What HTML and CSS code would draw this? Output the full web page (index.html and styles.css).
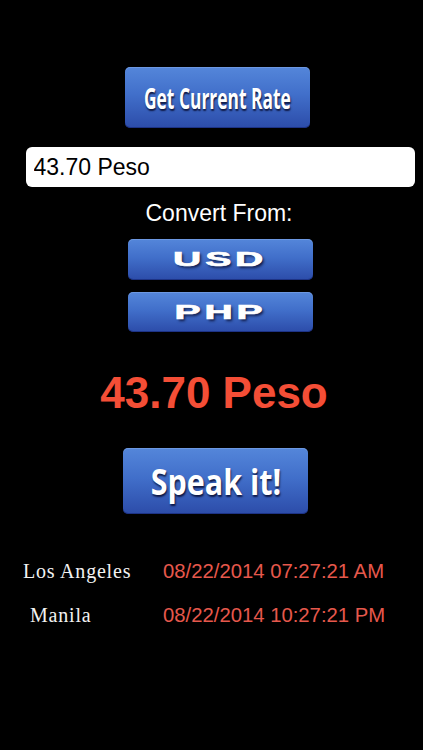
FILE: index.html
```html
<!DOCTYPE html>
<html lang="en">
<head>
<meta charset="utf-8">
<title>Peso Rate</title>
<link rel="stylesheet" href="styles.css">
</head>
<body>
<main class="screen">
  <button class="btn btn-rate" type="button"><span class="btn-label label-rate">Get Current Rate</span></button>
  <input class="rate-field" type="text" value="43.70 Peso" readonly>
  <div class="convert-label">Convert From:</div>
  <button class="btn btn-cur btn-usd" type="button"><span class="btn-label label-cur">USD</span></button>
  <button class="btn btn-cur btn-php" type="button"><span class="btn-label label-cur">PHP</span></button>
  <div class="result">43.70 Peso</div>
  <button class="btn btn-speak" type="button"><span class="btn-label label-speak">Speak it!</span></button>
  <section class="clocks">
    <div class="clock-row">
      <span class="city city-la">Los Angeles</span>
      <span class="time">08/22/2014 07:27:21 AM</span>
    </div>
    <div class="clock-row">
      <span class="city city-mnl">Manila</span>
      <span class="time">08/22/2014 10:27:21 PM</span>
    </div>
  </section>
</main>
</body>
</html>
```
FILE: styles.css
```css
html, body {
  margin: 0;
  padding: 0;
  background: #000;
}
body {
  width: 423px;
  height: 750px;
  overflow: hidden;
  font-family: "Liberation Sans", Arial, sans-serif;
  color: #fff;
}
.screen {
  display: flex;
  flex-direction: column;
  align-items: center;
  padding: 67px 0 0 11px;
  box-sizing: border-box;
  width: 423px;
}
.btn {
  display: flex;
  align-items: center;
  justify-content: center;
  border: 0;
  padding: 0;
  border-radius: 5px;
  background: linear-gradient(to bottom, #5486da 0%, #416fca 45%, #2c4ca9 100%);
  box-shadow: inset 0 1px 0 rgba(140, 175, 235, 0.45), inset 0 -1px 0 rgba(20, 35, 110, 0.6);
  color: #fff;
  overflow: hidden;
}
.btn-label {
  display: inline-block;
  white-space: nowrap;
  font-family: "Open Sans", "Liberation Sans", sans-serif;
  font-weight: 700;
  color: #fff;
  text-shadow: 1px 2px 2px rgba(0, 0, 30, 0.75);
}
.btn-rate {
  width: 185px;
  height: 61px;
}
.label-rate {
  font-size: 29px;
  transform: scaleX(0.6);
}
.rate-field {
  display: block;
  width: 389px;
  height: 40px;
  margin: 19px 0 0 6px;
  padding: 0 8px;
  box-sizing: border-box;
  border: 0;
  border-radius: 6px;
  background: #fff;
  color: #000;
  font-family: "Liberation Sans", Arial, sans-serif;
  font-size: 23px;
  outline: none;
}
.convert-label {
  margin: 13px 0 0 4px;
  font-size: 23px;
  line-height: 26px;
  color: #fff;
}
.btn-cur {
  width: 185px;
  border-radius: 5px;
}
.btn-usd {
  height: 41px;
  margin: 13px 0 0 7px;
}
.btn-php {
  height: 40px;
  margin: 12px 0 0 7px;
}
.label-cur {
  font-family: "Liberation Sans", Arial, sans-serif;
  font-weight: 700;
  font-size: 20px;
  letter-spacing: 2px;
  transform: scaleX(1.95);
  -webkit-text-stroke: 0.7px #fff;
}
.result {
  margin: 36px 6px 0 0;
  font-size: 44px;
  line-height: 50px;
  font-weight: 700;
  color: #f44e36;
}
.btn-speak {
  width: 185px;
  height: 66px;
  margin: 30px 3px 0 0;
}
.label-speak {
  font-size: 35px;
  transform: scaleX(0.87);
}
.clocks {
  align-self: stretch;
  margin: 45px 0 0 -11px;
  display: flex;
  flex-direction: column;
  gap: 20px;
}
.clock-row {
  display: grid;
  grid-template-columns: 163px auto;
  align-items: baseline;
  line-height: 24px;
}
.city {
  font-family: "Liberation Serif", "Times New Roman", serif;
  font-size: 20px;
  letter-spacing: 0.8px;
  color: #f2f2f2;
}
.city-la {
  padding-left: 23px;
}
.city-mnl {
  padding-left: 30px;
}
.time {
  font-family: "Liberation Sans", Arial, sans-serif;
  font-size: 20.3px;
  color: #e6584c;
}
```
